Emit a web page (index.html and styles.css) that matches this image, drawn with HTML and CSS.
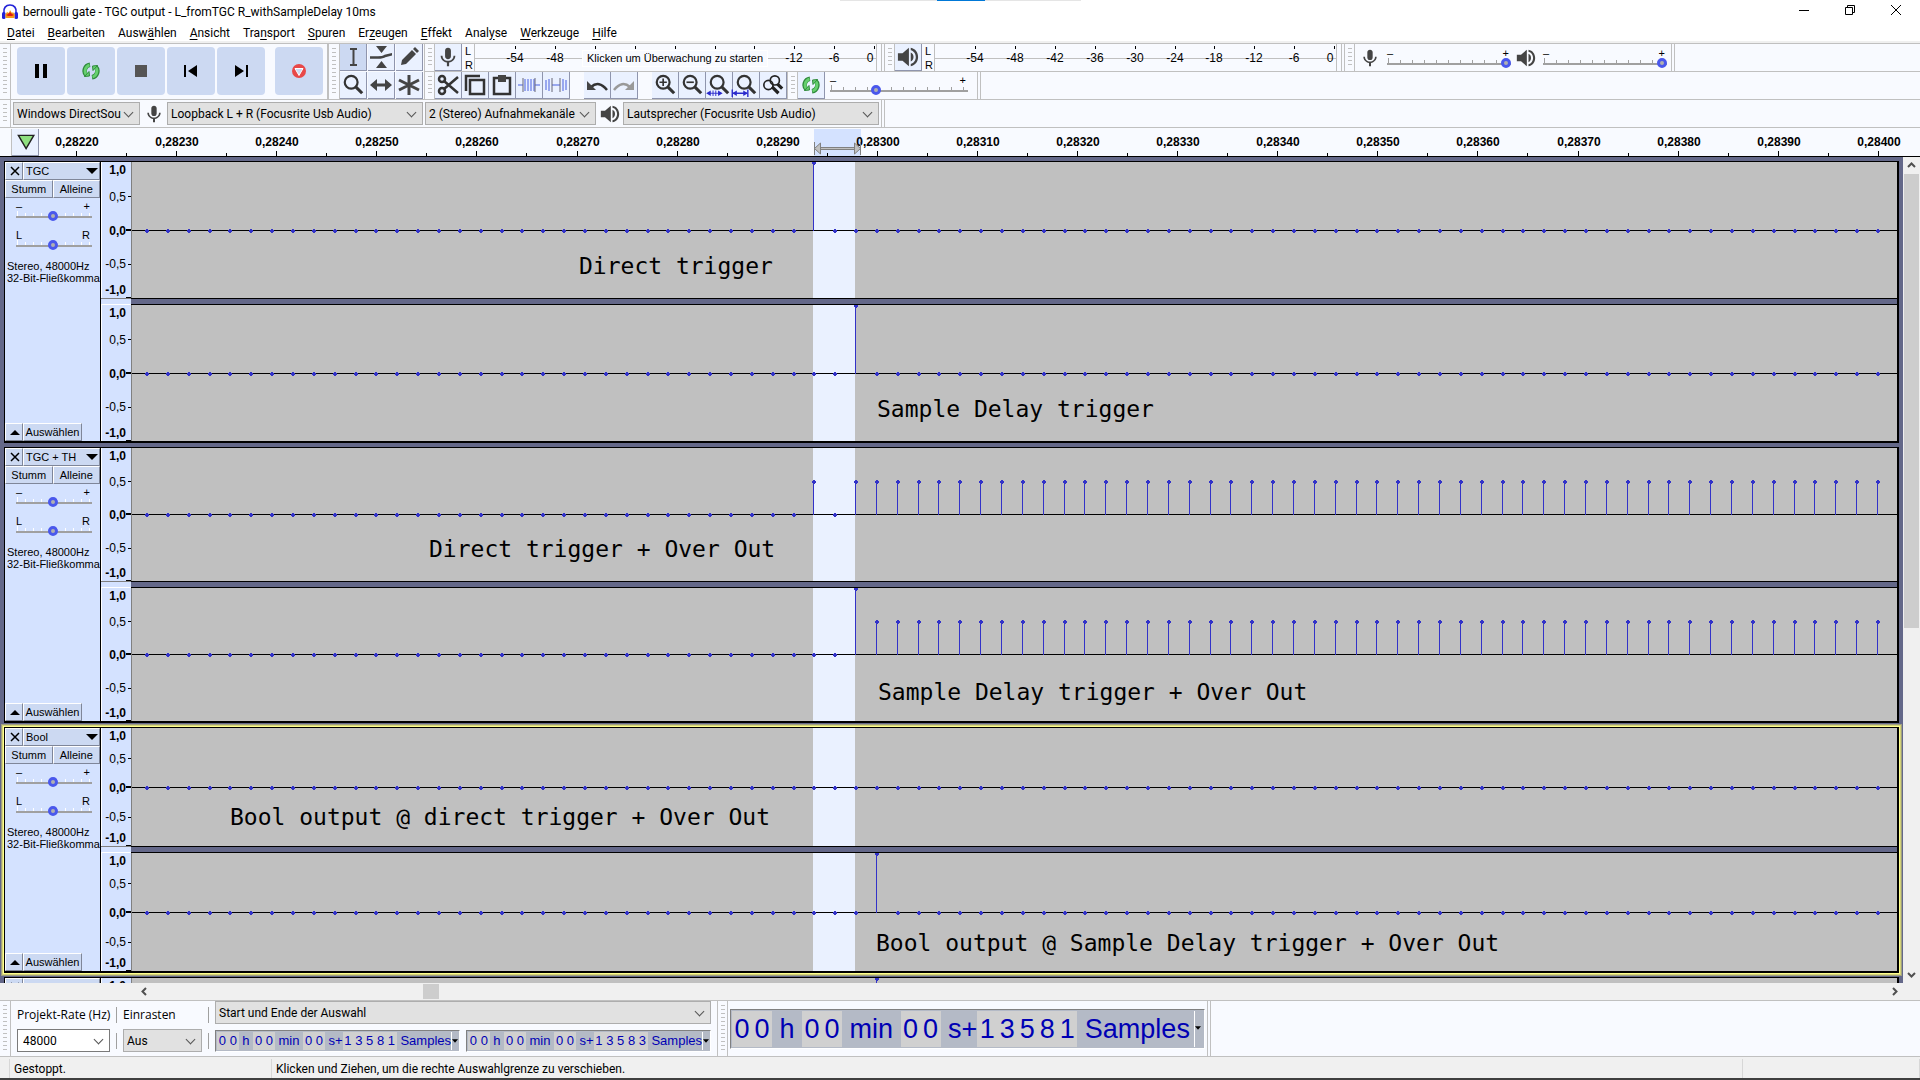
FILE: index.html
```html
<!DOCTYPE html>
<html lang="de">
<head>
    <meta charset="UTF-8">
    <meta name="viewport" content="width=device-width, initial-scale=1.0">
    <title>bernoulli gate - TGC output - L_fromTGC R_withSampleDelay 10ms</title>
    <link rel="stylesheet" href="styles.css">
</head>
<body>
    <svg class="sprite" aria-hidden="true">
        <symbol id="i-mic" viewBox="0 0 24 24"><path d="M12 14.5c1.9 0 3.2-1.4 3.2-3.200V5.200C15.200 3.400 13.900 2 12 2S8.800 3.400 8.800 5.200v6.100c0 1.800 1.300 3.200 3.200 3.200zM18 10.500c0 3.400-2.700 5.700-6 5.700s-6-2.300-6-5.700H4c0 3.800 3 6.900 6.800 7.400V22h2.400v-4.100c3.800-.5 6.800-3.600 6.800-7.400z"/></symbol>
        <symbol id="i-speaker" viewBox="0 0 24 24"><path d="M1 8v8h5l7 6V2L6 8zM15 7v10c2-.8 3-2.700 3-5s-1-4.200-3-5zM15 2v2.500c3.500.8 5.500 4 5.500 7.500s-2 6.700-5.500 7.500V22c5-.9 8-5 8-10s-3-9.100-8-10z"/></symbol>
        <symbol id="i-loop" viewBox="0 0 18 18"><g fill="none" stroke="#2f8a3c" stroke-width="4.500"><path d="M8 2.800A6.300 6.300 0 0 0 4.500 13.500"/><path d="M10 15.200A6.300 6.300 0 0 0 13.500 4.500"/></g><g fill="none" stroke="#66d06e" stroke-width="2.800"><path d="M7.500 3A6.300 6.300 0 0 0 4.500 13"/><path d="M10.500 15A6.300 6.300 0 0 0 13.500 5"/></g><path d="M2.500 14.500l5-.5-.5-4.500zM15.500 3.500l-5 .5.5 4.500z" fill="#66d06e" stroke="#2f8a3c"/></symbol>
        <symbol id="i-zoom" viewBox="0 0 24 24"><g fill="none" stroke="#333" stroke-width="2.400"><circle cx="10" cy="9" r="7"/><path d="M15 14l7 7" stroke-width="3.400"/></g></symbol>
    </svg>

    <div class="snap-strip"><span></span></div>

    <header class="titlebar">
        <svg class="app-icon" viewBox="0 0 16 16"><path d="M2 9C1 4 4 1 8 1s7 3 6 8" fill="none" stroke="#2222d8" stroke-width="1.600"/><rect x="0" y="8" width="3.500" height="7" rx="1.500" fill="#2222d8"/><rect x="12.500" y="8" width="3.500" height="7" rx="1.500" fill="#2222d8"/><path d="M3 11l2-3 2 1 1-3 2 3 1-1 2 3-1 3H4z" fill="#f59a18"/><path d="M4 11l2-1 2-2 2 2 2 1-2 1H6z" fill="#e02010"/></svg>
        <h1>bernoulli gate - TGC output - L_fromTGC R_withSampleDelay 10ms</h1>
        <div class="window-buttons">
            <button aria-label="Minimieren"><svg viewBox="0 0 12 12"><path d="M1 6.500h10"/></svg></button>
            <button aria-label="Wiederherstellen"><svg viewBox="0 0 12 12"><path d="M1.500 3.500h7v7h-7zM3.500 3.500v-2h7v7h-2"/></svg></button>
            <button aria-label="Schließen"><svg viewBox="0 0 12 12"><path d="M1 1l10 10M11 1L1 11"/></svg></button>
        </div>
    </header>

    <nav class="menubar">
        <button><u>D</u>atei</button>
        <button><u>B</u>earbeiten</button>
        <button>Ausw<u>ä</u>hlen</button>
        <button><u>A</u>nsicht</button>
        <button>Tra<u>n</u>sport</button>
        <button><u>S</u>puren</button>
        <button>Er<u>z</u>eugen</button>
        <button><u>E</u>ffekt</button>
        <button>Anal<u>y</u>se</button>
        <button><u>W</u>erkzeuge</button>
        <button><u>H</u>ilfe</button>
    </nav>

    <section class="toolbars">
        <div class="dock">
            <div class="transport">
                <i class="grip"></i>
                <button aria-label="Pause"><svg viewBox="0 0 18 18"><path d="M3 2h4v14H3zM11 2h4v14h-4z"/></svg></button>
                <button aria-label="Wiedergabe"><svg><use href="#i-loop"/></svg></button>
                <button aria-label="Stopp"><svg viewBox="0 0 18 18"><path d="M3 3h12v12H3z" fill="#555"/></svg></button>
                <button aria-label="Zum Anfang"><svg viewBox="0 0 18 18"><path d="M2 3h2v12H2zM15 3v12L6 9z"/></svg></button>
                <button aria-label="Zum Ende"><svg viewBox="0 0 18 18"><path d="M14 3h2v12h-2zM3 3v12l9-6z"/></svg></button>
                <button class="record" aria-label="Aufnahme"><svg viewBox="0 0 18 18"><circle cx="9" cy="9" r="7" fill="#e84848"/><path d="M5 6.500h8l-4 7z" fill="#ccd9f2" stroke="#fff"/></svg></button>
            </div>
            <div class="tools">
                <i class="grip"></i>
                <div class="tool-grid">
                    <button class="tool active" aria-label="Auswahlwerkzeug"><svg viewBox="0 0 22 22"><path d="M8 3h7M8 19h7M11.500 3v16" fill="none" stroke="#444" stroke-width="2"/></svg></button>
                    <button class="tool" aria-label="Hüllkurve"><svg viewBox="0 0 22 22"><path d="M6 0h11l-5.500 7zM6 22h11l-5.500-7z"/><path d="M-1 11.500h9q5 0 7-1.500l8-2" fill="none" stroke="#444" stroke-width="2.500"/></svg></button>
                    <button class="tool" aria-label="Zeichnen"><svg viewBox="0 0 22 22"><path d="M3 19l1-5L14 4l4 4L8 18zM15 3l2-2 4 4-2 2z"/></svg></button>
                    <button class="tool" aria-label="Zoom"><svg><use href="#i-zoom"/></svg></button>
                    <button class="tool" aria-label="Verschieben"><svg viewBox="0 0 22 22"><path d="M0 11l7-6v4.500h8V5l7 6-7 6v-4.500H7V17z"/></svg></button>
                    <button class="tool" aria-label="Multi"><svg viewBox="0 0 22 22"><path d="M11 1v20M1 6l20 10M1 16L21 6" stroke="#444" stroke-width="3"/></svg></button>
                </div>
            </div>
            <div class="dock-rows">
                <div class="dock-row">
                    <div class="bar">
                        <i class="grip"></i>
                        <button class="tool" aria-label="Aufnahmepegel"><svg><use href="#i-mic"/></svg></button>
                        <div class="lr"><span>L</span><span>R</span></div>
                        <div class="meter" data-labels="-54,-48,,,,,,-12,-6,0"><button class="placard">Klicken um Überwachung zu starten</button></div>
                    </div>
                    <div class="bar">
                        <i class="grip"></i>
                        <button class="tool" aria-label="Wiedergabepegel"><svg><use href="#i-speaker"/></svg></button>
                        <div class="lr"><span>L</span><span>R</span></div>
                        <div class="meter" data-labels="-54,-48,-42,-36,-30,-24,-18,-12,-6,0"></div>
                    </div>
                    <div class="bar mixer">
                        <i class="grip"></i>
                        <svg class="bar-icon"><use href="#i-mic"/></svg>
                        <div class="slider"><div class="ends"><span>–</span><span>+</span></div><input type="range" value="100" aria-label="Aufnahmelautstärke"></div>
                        <svg class="bar-icon"><use href="#i-speaker"/></svg>
                        <div class="slider"><div class="ends"><span>–</span><span>+</span></div><input type="range" value="100" aria-label="Wiedergabelautstärke"></div>
                    </div>
                </div>
                <div class="dock-row">
                    <div class="bar edit">
                        <i class="grip"></i>
                        <button class="tool" aria-label="Ausschneiden"><svg viewBox="0 0 22 22"><g fill="none" stroke="#333" stroke-width="2.500"><circle cx="5" cy="5" r="3"/><circle cx="5" cy="17" r="3"/><path d="M7 7l14 12M7 15L21 3"/></g></svg></button>
                        <button class="tool" aria-label="Kopieren"><svg viewBox="0 0 22 22"><path d="M2 17V2h14M6 6h14v14H6z" fill="none" stroke="#333" stroke-width="2.500"/></svg></button>
                        <button class="tool" aria-label="Einfügen"><svg viewBox="0 0 22 22"><path d="M3 4h16v16H3z" fill="none" stroke="#333" stroke-width="2.500"/><path d="M7 1h8v7H7z"/></svg></button>
                        <button class="tool" aria-label="Trimmen"><svg viewBox="0 0 22 22"><path d="M0 11h5M17 11h5M7 5v12M10 5v12M13 5v12M16 5v12" stroke="#7f90ea" stroke-width="1.500"/><path d="M5 4v14M17 4v14" stroke="#667"/></svg></button>
                        <button class="tool" aria-label="Stille"><svg viewBox="0 0 22 22"><path d="M1 6v10M4 5v12M18 5v12M21 6v10M7 11h8" stroke="#7f90ea" stroke-width="1.500"/><path d="M7 4v14M15 4v14" stroke="#667"/></svg></button>
                        <button class="tool spaced" aria-label="Rückgängig"><svg viewBox="0 0 22 22"><path d="M5 13q8-7 16 3" fill="none" stroke="#333" stroke-width="2.500"/><path d="M1 7v9h9z"/></svg></button>
                        <button class="tool" aria-label="Wiederholen" disabled><svg viewBox="0 0 22 22"><path d="M17 13q-8-7-16 3" fill="none" stroke="#999" stroke-width="2.500"/><path d="M21 7v9h-9z" fill="#999"/></svg></button>
                        <button class="tool spaced" aria-label="Einzoomen"><svg viewBox="0 0 24 24"><use href="#i-zoom"/><path d="M6 9h8M10 5v8" stroke="#333" stroke-width="1.800"/></svg></button>
                        <button class="tool" aria-label="Auszoomen"><svg viewBox="0 0 24 24"><use href="#i-zoom"/><path d="M6 9h8" stroke="#333" stroke-width="1.800"/></svg></button>
                        <button class="tool fit" aria-label="Auswahl einpassen"><svg viewBox="0 0 24 24"><use href="#i-zoom"/><path d="M-2 21l5-3v6zM16 21l-5-3v6z" fill="#2a2acc"/><path d="M1 21h12M5.500 18v6M8.500 18v6" stroke="#2a2acc"/></svg></button>
                        <button class="tool fit" aria-label="Projekt einpassen"><svg viewBox="0 0 24 24"><use href="#i-zoom"/><path d="M-3 17v8M14 17v8M-2 21h15" stroke="#2a2acc" stroke-width="1.500"/><path d="M-3 21l5-3v6zM14 21l-5-3v6z" fill="#2a2acc"/></svg></button>
                        <button class="tool" aria-label="Zoom umschalten"><svg viewBox="0 0 24 24"><g fill="none" stroke="#222" stroke-width="1.800"><circle cx="7" cy="12" r="5"/><circle cx="14" cy="7" r="5"/><path d="M11 14l7 7M17 11l5 5" stroke-width="3.500"/></g></svg></button>
                    </div>
                    <div class="bar speed">
                        <i class="grip"></i>
                        <button class="tool" aria-label="Wiedergabe mit Geschwindigkeit"><svg class="loop-small" viewBox="0 0 18 18"><use href="#i-loop"/></svg></button>
                        <div class="slider wide"><div class="ends"><span>–</span><span>+</span></div><input type="range" value="32" aria-label="Wiedergabegeschwindigkeit"></div>
                    </div>
                </div>
            </div>
        </div>
        <div class="devices">
            <i class="grip"></i>
            <div class="drop host"><select aria-label="Audio-Host"><option>Windows DirectSou</option></select></div>
            <svg class="bar-icon"><use href="#i-mic"/></svg>
            <div class="drop device"><select aria-label="Aufnahmegerät"><option>Loopback L + R (Focusrite Usb Audio)</option></select></div>
            <div class="drop channels-drop"><select aria-label="Aufnahmekanäle"><option>2 (Stereo) Aufnahmekanäle</option></select></div>
            <svg class="bar-icon"><use href="#i-speaker"/></svg>
            <div class="drop device"><select aria-label="Wiedergabegerät"><option>Lautsprecher (Focusrite Usb Audio)</option></select></div>
            <i class="bar-end"></i>
        </div>
    </section>

    <section class="timeline">
        <i class="grip-blank"></i>
        <button class="tool" aria-label="Abspielkopf anheften"><svg viewBox="0 0 20 20"><path d="M4 4h14l-7 12z" fill="#8fe080" stroke="#222" stroke-width="1.300"/></svg></button>
        <svg id="ruler"></svg>
    </section>

    <main class="workspace">
        <div class="tracks" id="tracks"></div>
        <div class="vscroll">
            <svg viewBox="0 0 17 17"><path d="M5 10l3.500-3.500L12 10"/></svg>
            <div class="vthumb"></div>
            <svg viewBox="0 0 17 17"><path d="M5 7l3.500 3.500L12 7"/></svg>
        </div>
    </main>
    <div class="hscroll">
        <svg viewBox="0 0 17 17"><path d="M10 5L6.500 8.500 10 12"/></svg>
        <div class="hrail"><div class="hthumb"></div></div>
        <svg viewBox="0 0 17 17"><path d="M7 5l3.500 3.500L7 12"/></svg>
    </div>

    <section class="selection-bar">
        <i class="grip"></i>
        <div class="field rate">
            <label for="rate">Projekt-Rate (Hz)</label>
            <div class="drop white"><input id="rate" type="text" value="48000"></div>
        </div>
        <div class="seps"><i></i><i></i></div>
        <div class="field snap">
            <label for="snap">Einrasten</label>
            <div class="drop"><select id="snap"><option>Aus</option></select></div>
        </div>
        <div class="seps"><i></i><i></i></div>
        <div class="range">
            <div class="drop"><select aria-label="Auswahlmodus"><option>Start und Ende der Auswahl</option></select></div>
            <div class="times">
                <div class="time" data-samples="13581"></div>
                <div class="time" data-samples="13583"></div>
            </div>
        </div>
        <i class="grip big-grip"></i>
        <div class="time big" data-samples="13581"></div>
        <i class="bar-end"></i>
    </section>

    <footer class="statusbar">
        <span class="state">Gestoppt.</span>
        <span class="hint">Klicken und Ziehen, um die rechte Auswahlgrenze zu verschieben.</span>
        <span class="extra"></span>
    </footer>

    <script src="script.js"></script>
</body>
</html>
```

FILE: styles.css
```css
* {
    box-sizing: border-box;
}
body {
    margin: 0;
    height: 100vh;
    display: flex;
    flex-direction: column;
    overflow: hidden;
    background: #f0f0f0;
    border-bottom: 2px solid #404040;
    font: 12px/16px Roboto, "Open Sans", sans-serif;
    color: #000;
}
button, select, input {
    font: inherit;
    color: inherit;
    margin: 0;
    padding: 0;
    border: 0;
    border-radius: 0;
    background: none;
}
svg {
    display: block;
    fill: #444;
}
.sprite {
    position: absolute;
    width: 0;
    height: 0;
}

/* title and menu */
.snap-strip {
    position: absolute;
    top: 0;
    left: 840px;
    width: 241px;
    height: 1px;
    background: #e5e5e5;
}
.snap-strip span {
    display: block;
    width: 48px;
    height: 1px;
    margin: 0 auto;
    background: #0078d7;
}
.titlebar {
    display: flex;
    align-items: center;
    height: 24px;
    padding-left: 2px;
    background: #fff;
}
.app-icon {
    width: 16px;
    height: 16px;
}
.titlebar h1 {
    flex: 1;
    margin: 0 0 0 5px;
    font-size: 12px;
    font-weight: normal;
}
.window-buttons {
    display: flex;
    align-self: flex-start;
    padding-right: 1px;
}
.window-buttons button {
    width: 46px;
    height: 20px;
    display: grid;
    place-items: center;
}
.window-buttons svg {
    width: 12px;
    height: 12px;
    fill: none;
    stroke: #000;
}
.menubar {
    display: flex;
    gap: 13px;
    height: 19px;
    padding: 0 7px;
    background: #fff;
    border-bottom: 2px solid #f0f0f0;
}
.menubar u {
    text-underline-offset: 2px;
}

/* toolbars */
.toolbars {
    border-top: 1px solid #c0c0c0;
    background: #f8faff;
}
.dock {
    display: flex;
    height: 56px;
}
.grip {
    flex: none;
    align-self: stretch;
    width: 11px;
    border-right: 1px solid #c0c0c0;
    background: repeating-linear-gradient(#c0c0c0 0 1px, transparent 1px 4px) center / 4px calc(100% - 8px) no-repeat;
}
.transport {
    display: flex;
    gap: 2px;
    padding-right: 4px;
    border-right: 2px solid #c0c0c0;
    border-bottom: 1px solid #c0c0c0;
}
.transport .grip {
    margin-right: 4px;
}
.transport button {
    width: 48px;
    height: 48px;
    margin-top: 3px;
    display: grid;
    place-items: center;
    border-radius: 4px;
    background: #ccd9f2;
}
.transport svg {
    width: 18px;
    height: 18px;
    fill: #000;
}
.transport .record {
    margin-left: 8px;
}
.tools {
    display: flex;
    border-right: 1px solid #c0c0c0;
    border-bottom: 1px solid #c0c0c0;
}
.tool-grid {
    display: grid;
    grid-template-columns: repeat(3, 28px);
    grid-template-rows: 28px 27px;
}
.tool {
    flex: none;
    width: 27px;
    height: 27px;
    display: grid;
    place-items: center;
    background: #eaf1ff;
    border-right: 1px solid #8f95ad;
    border-bottom: 1px solid #8f95ad;
}
.tool.active {
    background: #ccd9f2;
}
.tool svg {
    width: 22px;
    height: 22px;
}
.tool .loop-small {
    width: 18px;
    height: 18px;
}
.fit svg {
    overflow: visible;
}
.dock-rows {
    flex: 1;
}
.dock-row {
    display: flex;
    height: 28px;
    border-bottom: 1px solid #c0c0c0;
}
.bar {
    display: flex;
    border-right: 4px double #c0c0c0;
}
.bar .grip {
    width: 10px;
}
.lr {
    width: 12px;
    padding-left: 3px;
    font: 11px/14px "Liberation Sans", sans-serif;
}
.lr span {
    display: block;
}
.meter {
    position: relative;
    width: 403px;
    margin-right: 4px;
    border-left: 1px solid #c0c0c0;
    border-right: 1px solid #c0c0c0;
    font: 12px "Liberation Sans", sans-serif;
}
.meter svg {
    width: 100%;
    height: 27px;
}
.placard {
    position: absolute;
    left: 108px;
    top: 7px;
    width: 184px;
    height: 15px;
    line-height: 15px;
    font-size: 11px;
    background: #f8faff;
    outline: 1px solid #fff;
}
.bar-icon {
    flex: none;
    width: 20px;
    height: 20px;
}
.mixer {
    align-items: center;
    padding-right: 4px;
}
.mixer .bar-icon {
    margin: 0 7px 0 5px;
}
.slider {
    width: 124px;
}
.slider.wide {
    width: 138px;
}
.ends {
    display: flex;
    justify-content: space-between;
    height: 12px;
    padding: 0 2px 0 0;
    font: 11px/12px "Liberation Sans", sans-serif;
}
.slider input {
    --tick: #a0a0a0;
    appearance: none;
    display: block;
    width: 100%;
    height: 12px;
    margin-top: -2px;
    background:
        linear-gradient(#a0a0a0, #a0a0a0) 0 6px / 100% 2px no-repeat,
        linear-gradient(var(--tick), var(--tick)) 1px 1px / 1px 5px no-repeat,
        repeating-linear-gradient(90deg, var(--tick) 0 1px, transparent 1px 12px) 1px 3px / 100% 3px no-repeat;
}
.slider input::-webkit-slider-thumb {
    appearance: none;
    width: 10px;
    height: 10px;
    border: 3px solid #4a58ec;
    border-radius: 50%;
    background: #b0b0b0;
}
.edit {
    border-right: 1px solid #c0c0c0;
}
.speed {
    padding-right: 9px;
}
.speed .slider {
    margin: 2px 0 0 5px;
}
.edit .spaced {
    margin-left: 14px;
}
.devices {
    display: flex;
    align-items: center;
    height: 28px;
    border-bottom: 1px solid #c0c0c0;
}
.devices .grip {
    margin-right: 2px;
}
.devices .bar-icon {
    margin: 0 3px 0 4px;
}
.bar-end {
    align-self: stretch;
    width: 6px;
    border-right: 4px double #c0c0c0;
}
.drop {
    position: relative;
    height: 23px;
    border: 1px solid #adadad;
    background: #e1e1e1;
}
.drop::after {
    content: "";
    position: absolute;
    right: 7px;
    top: 6px;
    width: 6px;
    height: 6px;
    border: solid #555;
    border-width: 0 1px 1px 0;
    transform: rotate(45deg);
}
.drop select, .drop input {
    appearance: none;
    display: block;
    width: calc(100% - 18px);
    height: 21px;
    padding-left: 3px;
    overflow: hidden;
    text-overflow: clip;
    outline: 0;
}
.drop.white {
    background: #fff;
    border-color: #7a7a7a;
}
.drop.white input {
    padding-left: 5px;
}
.host {
    width: 127px;
}
.device {
    width: 256px;
}
.channels-drop {
    width: 171px;
    margin-left: 2px;
}

/* timeline */
.timeline {
    display: flex;
    height: 29px;
    padding-top: 1px;
    background: #f8faff;
    border-bottom: 1px solid #000;
}
.grip-blank {
    width: 12px;
    border-right: 1px solid #c0c0c0;
}
#ruler {
    flex: 1;
    height: 27px;
    font: bold 12px "Liberation Sans", sans-serif;
    fill: #000;
}

/* tracks */
.workspace {
    flex: 1;
    min-height: 0;
    display: flex;
    background: #646889;
}
.tracks {
    flex: 1;
    min-width: 0;
    overflow: hidden;
    display: flex;
    flex-direction: column;
    gap: 4px;
    padding: 4px 4px 0;
    font: 11px/12px "Liberation Sans", sans-serif;
}
.track {
    flex: none;
    display: flex;
    border: solid #000;
    border-width: 1px 2px 2px 1px;
    background: #d4e2ff;
}
.track.focused {
    box-shadow: 0 0 0 1px #ffff8c, 0 0 0 2px #d2d278, 0 0 0 3px #a0a080;
}
.panel {
    flex: none;
    display: flex;
    flex-direction: column;
    width: 96px;
    border-right: 1px solid #000;
}
.panel-row {
    display: flex;
    height: 18px;
}
.panel-row button {
    flex: 1;
    overflow: hidden;
    white-space: nowrap;
    background: #ccd9f2;
    border: 1px solid #fff;
    border-right-color: #7f8699;
    border-bottom-color: #7f8699;
}
.panel-row .small {
    flex: 0 0 18px;
    display: grid;
    place-items: center;
    padding-left: 2px;
}
.small svg {
    width: 12px;
    height: 12px;
    fill: #000;
    stroke: #000;
}
.panel-row .name {
    display: flex;
    align-items: center;
    justify-content: space-between;
    padding: 0 1px 0 2px;
}
.name svg {
    width: 12px;
    height: 6px;
    fill: #000;
}
.panel .slider {
    width: 76px;
    margin: 2px 0 5px 11px;
}
.panel .slider input {
    --tick: #fff;
    background:
        linear-gradient(#a0a0a0, #a0a0a0) 0 6px / 100% 2px no-repeat,
        linear-gradient(var(--tick), var(--tick)) 1px 1px / 1px 5px no-repeat,
        repeating-linear-gradient(90deg, var(--tick) 0 1px, transparent 1px 8px) 1px 3px / 100% 3px no-repeat;
}
.format {
    margin: 4px 0 0 2px;
    white-space: nowrap;
}
.panel-foot {
    margin-top: auto;
    width: 77px;
}
.channels {
    flex: 1;
    min-width: 0;
    display: flex;
    flex-direction: column;
}
.channel {
    flex: 1;
    min-height: 0;
    display: flex;
}
.scale {
    flex: none;
    width: 31px;
    height: 100%;
    border-left: 1px solid #fff;
    border-right: 1px solid #808080;
    font-size: 12px;
    fill: #000;
}
.scale .strong {
    font-weight: bold;
}
.wave {
    flex: 1;
    min-width: 0;
    height: 100%;
    background: #c0c0c0;
}
.wave .selected {
    fill: #eaf1ff;
}
.wave .axis {
    fill: #000;
}
.wave .sample {
    fill: #3232c8;
}
.wave .note {
    font: 23px "DejaVu Sans Mono", monospace;
    fill: #000;
}
.divider {
    flex: none;
    height: 7px;
    display: flex;
}
.divider::before {
    content: "";
    width: 30px;
    border-top: 1px solid #808080;
    border-bottom: 1px solid #fff;
}
.divider::after {
    content: "";
    flex: 1;
    background: #646889;
    border: solid #000;
    border-width: 1px 0;
}

/* scrollbars */
.vscroll {
    width: 17px;
    display: flex;
    flex-direction: column;
    background: #f0f0f0;
}
.vscroll svg, .hscroll svg {
    flex: none;
    width: 17px;
    height: 17px;
    fill: none;
    stroke: #505050;
    stroke-width: 2;
}
.vthumb {
    height: 55%;
    margin: 0 1px auto;
    background: #cdcdcd;
}
.hscroll {
    display: flex;
    height: 17px;
    padding: 0 17px 0 136px;
}
.hrail {
    flex: 1;
    padding: 1px 0;
}
.hthumb {
    width: 16px;
    height: 15px;
    margin-left: 15.6%;
    background: #cdcdcd;
}

/* selection toolbar */
.selection-bar {
    display: flex;
    height: 57px;
    background: #f8faff;
    border-top: 1px solid #c0c0c0;
    border-bottom: 1px solid #c0c0c0;
}
.field {
    display: flex;
    flex-direction: column;
    justify-content: space-between;
    padding: 6px 0 4px;
}
.rate {
    width: 93px;
    margin-left: 6px;
}
.snap {
    width: 79px;
}
.field label {
    font-family: "Open Sans", "Noto Sans", sans-serif;
    white-space: nowrap;
}
.seps {
    width: 13px;
    display: flex;
    flex-direction: column;
    justify-content: space-between;
    align-items: center;
    padding: 6px 0 7px;
}
.seps i {
    width: 1px;
    height: 16px;
    background: #a0a0a0;
}
.range {
    width: 496px;
    display: flex;
    flex-direction: column;
    justify-content: space-between;
    padding-bottom: 4px;
}
.times {
    display: flex;
    justify-content: space-between;
}
.time {
    width: 245px;
    height: 22px;
    display: flex;
    padding: 1px;
    border: 1px solid #808080;
    border-right-color: #fff;
    border-bottom-color: #fff;
    background: #b4bac6;
    font: 13px/18px "Liberation Sans", sans-serif;
    color: #0000b4;
    white-space: pre;
}
.time b {
    width: 11px;
    font-weight: normal;
    text-align: center;
    background: #d0d0d0;
}
.time button {
    margin-left: auto;
    width: 7px;
    border-left: 1px solid #fff;
}
.time button svg {
    width: 6px;
    height: 5px;
    fill: #000;
}
.time.big {
    align-self: center;
    width: 475px;
    height: 40px;
    margin-left: 2px;
    font-size: 27px;
    line-height: 36px;
}
.big b {
    width: 20px;
}
.big button {
    width: 9px;
}
.big-grip {
    margin-left: 6px;
    border-left: 1px solid #c0c0c0;
}

/* status */
.statusbar {
    display: flex;
    height: 21px;
    padding: 2px 0 0;
}
.statusbar span {
    padding-left: 4px;
    line-height: 21px;
    border-left: 1px solid #d7d7d7;
}
.state {
    width: 262px;
    margin-left: 9px;
}
.hint {
    flex: 1;
}
.extra {
    width: 178px;
    border-right: 1px solid #d7d7d7;
}
```

FILE: script.js
```js
const SAMPLE_STEP = 20.855;
const FIRST_SAMPLE = 15;
const SAMPLE_COUNT = 84;

const tracks = [
    {
        name: 'TGC', height: 282,
        channels: [
            { level: i => i === 32 ? 1 : 0, note: ['Direct trigger', 447, 112] },
            { level: i => i === 34 ? 1 : 0, note: ['Sample Delay trigger', 745, 112] }
        ]
    },
    {
        name: 'TGC + TH', height: 276,
        channels: [
            { level: i => i === 32 || i >= 34 ? 0.5 : 0, note: ['Direct trigger + Over Out', 297, 109] },
            { level: i => i === 34 ? 1 : i > 34 ? 0.5 : 0, note: ['Sample Delay trigger + Over Out', 746, 112] }
        ]
    },
    {
        name: 'Bool', height: 246, focused: true,
        channels: [
            { level: () => 0, note: ['Bool output @ direct trigger + Over Out', 98, 97] },
            { level: i => i === 35 ? 1 : 0, note: ['Bool output @ Sample Delay trigger + Over Out', 744, 98] }
        ]
    },
    // scrolled out of view except for its top edge
    {
        name: '', height: 246, collapsed: true,
        channels: [
            { level: i => i === 35 ? 1 : 0 },
            { level: () => 0 }
        ]
    }
];

function scaleSvg(h, collapsed) {
    const mid = Math.floor(h / 2);
    const marks = [['1,0', 12, 1], ['0,5', Math.round(h / 4) + 5, 0], ['0,0', mid + 5, 1], ['-0,5', Math.round(h * 3 / 4) + 4, 0], ['-1,0', h - 4, 1]];
    let out = '';
    marks.slice(0, collapsed ? 1 : 5).forEach(([text, y, strong]) => {
        out += `<text x="24" y="${y}" text-anchor="end" class="${strong ? 'strong' : ''}">${text}</text>`;
    });
    out += `<path d="M26 ${Math.round(h / 4)}h4v1h-4zM24 ${mid - 1}h6v2h-6zM26 ${Math.round(h * 3 / 4)}h4v1h-4zM24 ${h - 1}h6v1h-6z"/>`;
    return `<svg class="scale">${out}</svg>`;
}

function waveSvg(channel, h) {
    const mid = Math.floor(h / 2);
    let d = '';
    for (let i = 0; i < SAMPLE_COUNT; i++) {
        const x = Math.round(FIRST_SAMPLE + i * SAMPLE_STEP);
        const v = channel.level(i);
        const y = v === 1 ? 1 : Math.round(mid - v * h / 2) + 1;
        d += `M${x - 2} ${y - 1}h4v2h-4zM${x - 1} ${y - 2}h2v1h-2zM${x - 1} ${y + 1}h2v1h-2z`;
        if (v > 0) {
            d += `M${x - 1} ${y}h1V${mid + 1}h-1z`;
        }
    }
    const note = channel.note
        ? `<text class="note" x="${channel.note[1]}" y="${channel.note[2]}">${channel.note[0]}</text>`
        : '';
    return `<svg class="wave">
        <rect class="selected" x="681" y="0" width="42" height="${channel.note ? '100%' : 0}"/>
        <rect class="axis" x="0" y="${mid}" width="100%" height="1"/>
        <path class="sample" d="${d}"/>
        ${note}
    </svg>`;
}

const panelBody = `
    <div class="panel-row"><button>Stumm</button><button>Alleine</button></div>
    <div class="slider"><div class="ends"><span>–</span><span>+</span></div><input type="range" value="48" aria-label="Lautstärke"></div>
    <div class="slider"><div class="ends"><span>L</span><span>R</span></div><input type="range" value="48" aria-label="Balance"></div>
    <div class="format">Stereo, 48000Hz<br>32-Bit-Fließkomma</div>
    <div class="panel-row panel-foot">
        <button class="small" aria-label="Einklappen"><svg viewBox="0 0 12 12"><path d="M1 9h10L6 4z" stroke="none"/></svg></button>
        <button>Auswählen</button>
    </div>`;

function trackHtml(track) {
    const h = (track.height - 10) / 2;
    const channels = (track.collapsed ? track.channels.slice(0, 1) : track.channels)
        .map(c => `<div class="channel">${scaleSvg(h, track.collapsed)}${waveSvg(c, h)}</div>`)
        .join('<div class="divider"></div>');
    return `<section class="track ${track.focused ? 'focused' : ''}" style="height:${track.height}px">
        <div class="panel">
            <div class="panel-row">
                <button class="small" aria-label="Spur schließen"><svg viewBox="0 0 12 12"><path d="M2 2l8 8M10 2l-8 8" stroke-width="1.500"/></svg></button>
                <button class="name">${track.name}<svg viewBox="0 0 12 6"><path d="M0 0h12L6 6z"/></svg></button>
            </div>
            ${track.collapsed ? '' : panelBody}
        </div>
        <div class="channels">${channels}</div>
    </section>`;
}

document.getElementById('tracks').innerHTML = tracks.map(trackHtml).join('');

// time ruler, starts 39px from the window edge
function drawRuler() {
    let out = '<rect x="775" y="0" width="47" height="27" fill="#d4e2ff"/>';
    for (let k = 0; k <= 18; k++) {
        const x = Math.round(38 + k * 100.1);
        out += `<text x="${x}" y="17" text-anchor="middle">0,${28220 + k * 10}</text>`;
        out += `<path d="M${x - 1} 22h1v5h-1z"/>`;
        if (k < 18) {
            out += `<path d="M${x + 49} 24h1v3h-1z"/>`;
        }
    }
    out += '<path d="M775.5 13v13M781.500 14v11l-6-5.500zM821.500 13v13M815.500 14v11l6-5.500zM781.500 18.500h34v2h-34z" fill="#c0c0c0" stroke="#808080"/>';
    document.getElementById('ruler').innerHTML = out;
}
drawRuler();

document.querySelectorAll('.meter').forEach(meter => {
    let out = '<path d="M0 14h401v1H0z" fill="#c0c0c0"/>';
    meter.dataset.labels.split(',').forEach((label, i) => {
        const x = Math.round(40 + i * 39.9);
        out += `<path d="M${x} 2h1v3h-1z" fill="#000"/>`;
        out += `<text x="${label === '0' ? x - 4 : x}" y="18" text-anchor="middle" fill="#000">${label}</text>`;
    });
    meter.insertAdjacentHTML('afterbegin', `<svg>${out}</svg>`);
});

document.querySelectorAll('.time').forEach(box => {
    const digits = s => [...s].map(c => `<b>${c}</b>`).join('');
    box.innerHTML = digits('00') + '<span> h </span>' + digits('00') + '<span> min </span>' + digits('00')
        + '<span> s+</span>' + digits(box.dataset.samples) + '<span> Samples</span>'
        + '<button aria-label="Format"><svg viewBox="0 0 7 5"><path d="M0 0h7L3.500 4z"/></svg></button>';
});
```
